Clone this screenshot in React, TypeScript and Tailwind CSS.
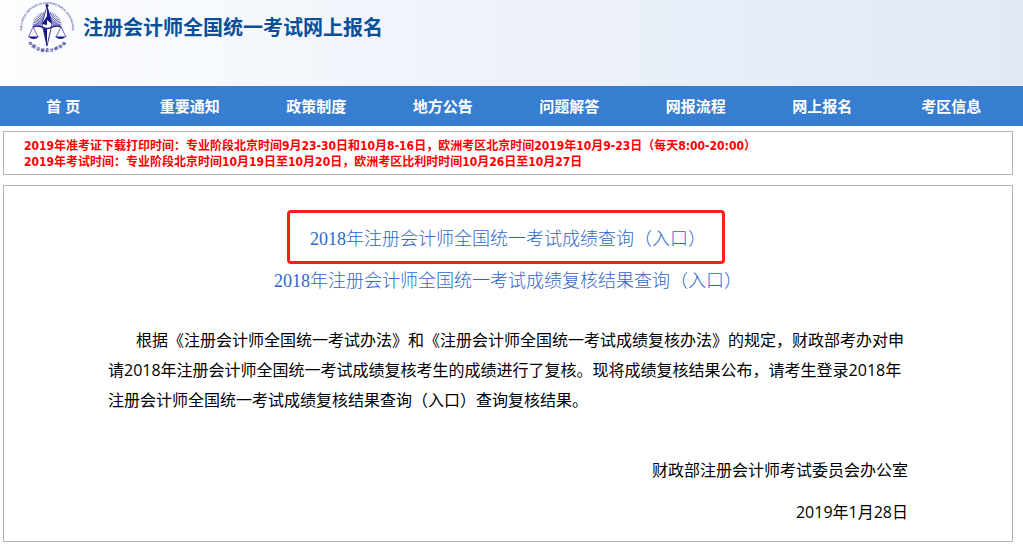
const navItems = ['首 页', '重要通知', '政策制度', '地方公告', '问题解答', '网报流程', '网上报名', '考区信息'];

const rays = Array.from({ length: 25 }, (_, i) => (i * 7.5 * Math.PI) / 180);

function Logo() {
  return (
    <svg width="60" height="56" viewBox="0 0 60 56" className="shrink-0" role="img" aria-label="中国注册会计师协会">
      <defs>
        <path id="ring-top" d="M6 36 A25 25 0 1 1 54 36" />
        <path id="ring-bottom" d="M11 43.500 A25.500 25.500 0 0 0 49 43.500" />
      </defs>
      <text className="fill-[#3b3b9c] font-['Liberation_Sans'] text-[2.6px] font-bold">
        <textPath href="#ring-top" startOffset="50%" textAnchor="middle">
          THE CHINESE INSTITUTE OF CERTIFIED PUBLIC ACCOUNTANTS
        </textPath>
      </text>
      <text className="fill-[#2b2b98] font-['Noto_Sans_CJK_SC'] text-[4px] font-bold">
        <textPath href="#ring-bottom" startOffset="50%" textAnchor="middle">
          中 国 注 册 会 计 师 协 会
        </textPath>
      </text>
      <g stroke="#5f5fb0" strokeWidth="0.9">
        {rays.map((a) => (
          <line
            key={a}
            x1={30 + Math.cos(a) * 6}
            y1={26 - Math.sin(a) * 6}
            x2={30 + Math.cos(a) * 14.5}
            y2={26 - Math.sin(a) * 14.5}
          />
        ))}
      </g>
      <path d="M30 6 L25 24 L30 46 L35 24 Z" fill="#fff" stroke="#24248f" strokeWidth="0.9" />
      <path d="M30 6 L35 24 L30 20 Z M26 27 L30 29 V46 Z M25 24 L30 16 V25 Z" fill="#14148a" />
      <circle cx="30" cy="5.500" r="1.600" fill="#24248f" />
      <path d="M16 27 Q20 25 25 27 Q30 30 35 27 Q40 25 44 27" fill="none" stroke="#24248f" strokeWidth="1.400" />
      <path d="M16 27 L11.500 37 M16 27 L21 37 M44 27 L39 37 M44 27 L49 37" stroke="#5a5aae" strokeWidth="0.900" />
      <path d="M11 36.500 H22 Q16.500 41.500 11 36.500 Z M38 36.500 H49 Q43.500 41.500 38 36.500 Z" fill="#14148a" />
    </svg>
  );
}

function App() {
  return (
    <div className="bg-white text-black font-['Open_Sans','Noto_Sans_CJK_SC',sans-serif]">
      <header className="flex h-[86px] items-start bg-linear-to-r from-[#fcfdfe] via-[#edf2fa] to-[#e2e9f5] pl-[17px]">
        <Logo />
        <h1 className="pt-[13px] pl-1.5 text-xl leading-[30px] font-bold text-[#0a4f98]">
          注册会计师全国统一考试网上报名
        </h1>
      </header>

      <nav className="grid h-10 grid-cols-[repeat(7,126fr)_131fr] items-center bg-[#377dd0] pr-1.5 text-center text-[15px] font-bold text-white">
        {navItems.map((item) => (
          <a key={item} href="#">
            {item}
          </a>
        ))}
      </nav>

      <main className="mt-[5px] mr-2.5 ml-[3px]">
        <section className="border border-[#b4b4b4] px-5 pt-1.5 pb-1 font-['DejaVu_Sans_Condensed','Noto_Sans_CJK_SC',sans-serif] text-xs leading-4 font-bold text-[#f00]">
          <p>2019年准考证下载打印时间：专业阶段北京时间9月23-30日和10月8-16日，欧洲考区北京时间2019年10月9-23日（每天8:00-20:00）</p>
          <p>2019年考试时间：专业阶段北京时间10月19日至10月20日，欧洲考区比利时时间10月26日至10月27日</p>
        </section>

        <section className="mt-2.5 border border-[#b4b4b4] pt-6 pb-3.5">
          <div className="flex flex-col items-center font-['Liberation_Serif','Noto_Sans_CJK_SC',serif] text-lg leading-[30px] font-light text-[#2f66c8]">
            <a href="#" className="mr-1 rounded-[4px] border-3 border-[#ff2015] pt-[11px] pr-4 pb-[7px] pl-5">
              2018年注册会计师全国统一考试成绩查询（入口）
            </a>
            <a href="#" className="mt-0.5">
              2018年注册会计师全国统一考试成绩复核结果查询（入口）
            </a>
          </div>

          <article className="mx-auto mt-[29px] max-w-[800px] text-base leading-[30px]">
            <p className="indent-7">
              根据《注册会计师全国统一考试办法》和《注册会计师全国统一考试成绩复核办法》的规定，财政部考办对申请2018年注册会计师全国统一考试成绩复核考生的成绩进行了复核。现将成绩复核结果公布，请考生登录2018年注册会计师全国统一考试成绩复核结果查询（入口）查询复核结果。
            </p>
            <p className="mt-10 text-right">财政部注册会计师考试委员会办公室</p>
            <p className="mt-3 text-right">2019年1月28日</p>
          </article>
        </section>
      </main>
    </div>
  );
}

export default App;
